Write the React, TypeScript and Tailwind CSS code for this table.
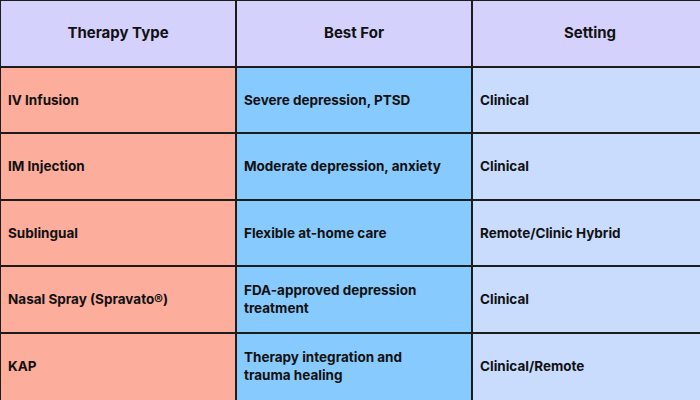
const headers = ['Therapy Type', 'Best For', 'Setting']

const rows = [
  ['IV Infusion', 'Severe depression, PTSD', 'Clinical'],
  ['IM Injection', 'Moderate depression, anxiety', 'Clinical'],
  ['Sublingual', 'Flexible at-home care', 'Remote/Clinic Hybrid'],
  ['Nasal Spray (Spravato®)', 'FDA-approved depression treatment', 'Clinical'],
  ['KAP', 'Therapy integration and trauma healing', 'Clinical/Remote'],
]

const colBg = ['bg-[#fdad9b]', 'bg-[#87cafd]', 'bg-[#c9dcfd]']

const App = () => {
  return (
    <div className="w-[700px] h-[400px] overflow-hidden bg-white">
      <div
        className="-ml-px -mt-px grid grid-cols-[236px_236px_236px] text-[#111111]"
        style={{ fontFamily: 'Inter, "Open Sans", sans-serif' }}
      >
        {headers.map((h) => (
          <div
            key={h}
            className="h-[66.5px] border-l-2 border-t-2 border-[#1c1c1c] bg-[#d5d1fd] flex items-center justify-center text-[15px] font-bold"
          >
            {h}
          </div>
        ))}
        {rows.map((row, r) =>
          row.map((cell, i) => (
            <div
              key={row[0] + i}
              className={`${r === rows.length - 1 ? 'h-[70px] pb-[3.5px]' : 'h-[66.5px]'} border-l-2 border-t-2 border-[#1c1c1c] ${colBg[i]} flex items-center pl-[7px] pr-3 text-[13.5px] leading-[18px] font-bold`}
            >
              <span className="max-w-[200px]">{cell}</span>
            </div>
          ))
        )}
      </div>
    </div>
  )
}

export default App
